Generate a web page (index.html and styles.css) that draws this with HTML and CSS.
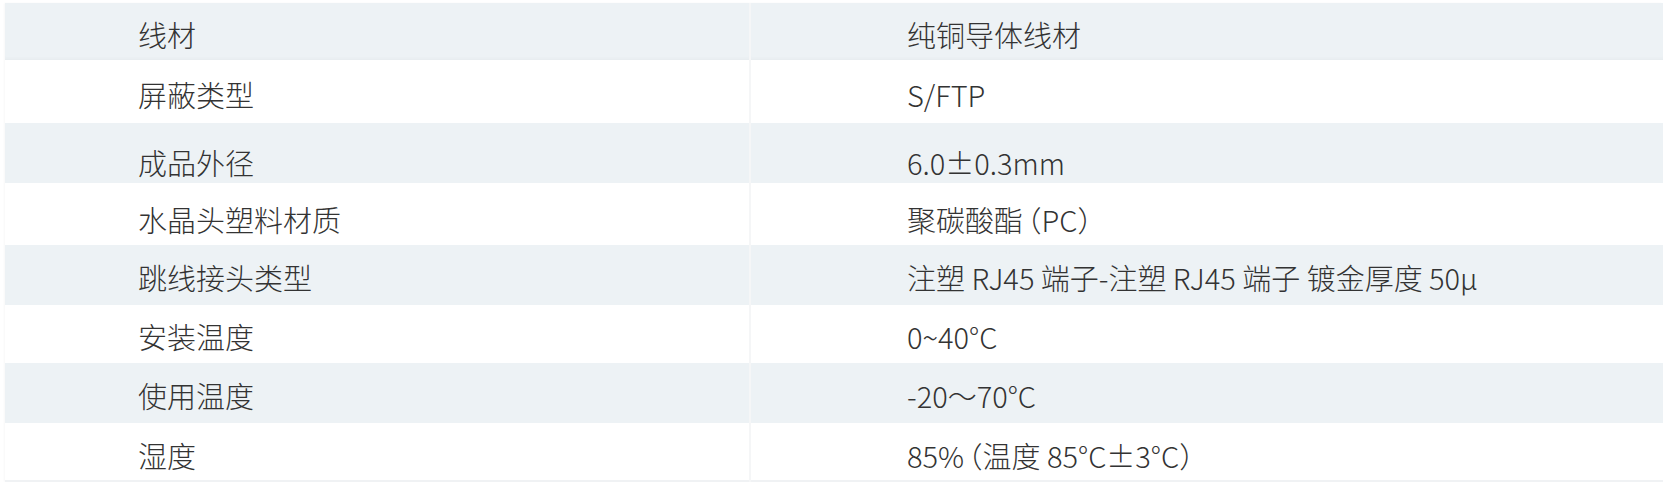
FILE: index.html
```html
<!DOCTYPE html>
<html lang="zh-CN">
<head>
<meta charset="utf-8">
<link rel="stylesheet" href="styles.css">
</head>
<body>
<table class="spec">
<tbody>
<tr class="alt"><td class="k">线材</td><td class="v">纯铜导体线材</td></tr>
<tr><td class="k">屏蔽类型</td><td class="v">S/FTP</td></tr>
<tr class="alt"><td class="k">成品外径</td><td class="v">6.0±0.3mm</td></tr>
<tr><td class="k">水晶头塑料材质</td><td class="v">聚碳酸酯<span class="po">（</span>PC<span class="pc">）</span></td></tr>
<tr class="alt"><td class="k">跳线接头类型</td><td class="v">注塑 RJ45 端子-注塑 RJ45 端子 镀金厚度 50μ</td></tr>
<tr><td class="k">安装温度</td><td class="v">0~40°C</td></tr>
<tr class="alt"><td class="k">使用温度</td><td class="v">-20～70°C</td></tr>
<tr><td class="k">湿度</td><td class="v">85%<span class="po">（</span>温度 85°C±3°C<span class="pc">）</span></td></tr>
</tbody>
</table>
</body>
</html>
```
FILE: styles.css
```css
html, body {
  margin: 0;
  padding: 0;
  background: #ffffff;
}
body {
  padding: 3px 6px 0 5px;
  font-family: "Noto Sans CJK SC", "Noto Sans", sans-serif;
  font-weight: 300;
  color: #333333;
}
.spec {
  width: 100%;
  border-collapse: collapse;
  border-bottom: 2px solid #f0f2f4;
  box-shadow: -1px 0 2px rgba(0,0,0,0.03);
}
.spec td {
  padding: 0;
  font-size: 29px;
  line-height: 1;
  vertical-align: middle;
  box-sizing: border-box;
  padding-top: 5px;
}
.spec tr:nth-child(1) td { height: 57px; box-shadow: inset 0 -4px 3px -2px rgba(0,0,0,0.025); }
.spec tr:nth-child(2) td { height: 63px; padding-top: 6px; }
.spec tr:nth-child(3) td { height: 60px; padding-top: 19px; }
.spec tr:nth-child(4) td { height: 62px; padding-top: 11px; }
.spec tr:nth-child(5) td { height: 60px; }
.spec tr:nth-child(6) td { height: 58px; }
.spec tr:nth-child(7) td { height: 60px; }
.spec tr:nth-child(8) td { height: 58px; padding-top: 7px; }
.spec tr.alt td {
  background-color: #edf2f5;
}
.spec td.k {
  width: 745px;
  padding-left: 133px;
  border-right: 2px solid #f5f6f7;
}
.spec td.v {
  padding-left: 156px;
}
.spec .po {
  font-feature-settings: "halt";
  margin-left: 4px;
}
.spec .pc {
  font-feature-settings: "halt";
}
```
